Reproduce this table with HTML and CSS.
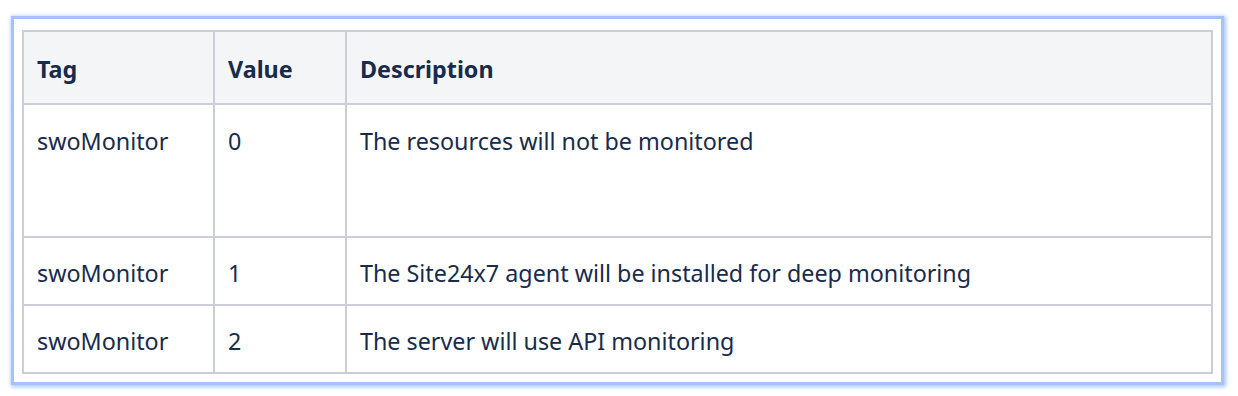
FILE: index.html
```html
<!DOCTYPE html>
<html>
<head>
<meta charset="utf-8">
<link rel="stylesheet" href="styles.css">
</head>
<body>
<div class="frame">
  <table class="tags">
    <colgroup>
      <col class="c-tag">
      <col class="c-val">
      <col class="c-desc">
    </colgroup>
    <thead>
      <tr><th>Tag</th><th>Value</th><th>Description</th></tr>
    </thead>
    <tbody>
      <tr class="tall"><td>swoMonitor</td><td>0</td><td>The resources will not be monitored</td></tr>
      <tr><td>swoMonitor</td><td>1</td><td>The Site24x7 agent will be installed for deep monitoring</td></tr>
      <tr><td>swoMonitor</td><td>2</td><td>The server will use API monitoring</td></tr>
    </tbody>
  </table>
</div>
</body>
</html>
```

FILE: styles.css
```css
html, body {
  margin: 0;
  padding: 0;
  background: #ffffff;
}
body {
  padding: 19px 0 0 14px;
  font-family: "Noto Sans", "Open Sans", sans-serif;
  color: #172b4d;
  height: 396px;
  box-sizing: border-box;
  overflow: hidden;
}
.frame {
  width: 1207px;
  height: 363px;
  box-sizing: border-box;
  padding: 11px 8px 0 8px;
  background: #ffffff;
  overflow: hidden;
  box-shadow: 0 0 0 3px #a6c2fa, 1px 1px 4px 4px rgba(145, 182, 250, 0.8);
}
.tags {
  width: 1191px;
  border-collapse: collapse;
  table-layout: fixed;
  font-size: 23.3px;
}
.c-tag { width: 191px; }
.c-val { width: 132px; }
.tags th, .tags td {
  border: 2px solid #cbced6;
  text-align: left;
  padding: 0 13px;
  line-height: 28px;
}
.tags th {
  background: #f4f5f7;
  font-weight: 700;
  height: 73px;
  box-sizing: border-box;
  padding-top: 2px;
}
.tags td {
  height: 68px;
  box-sizing: border-box;
  font-weight: 400;
  padding-top: 4px;
}
.tags tr.tall td {
  height: 133px;
  vertical-align: top;
  padding-top: 22px;
}
```
